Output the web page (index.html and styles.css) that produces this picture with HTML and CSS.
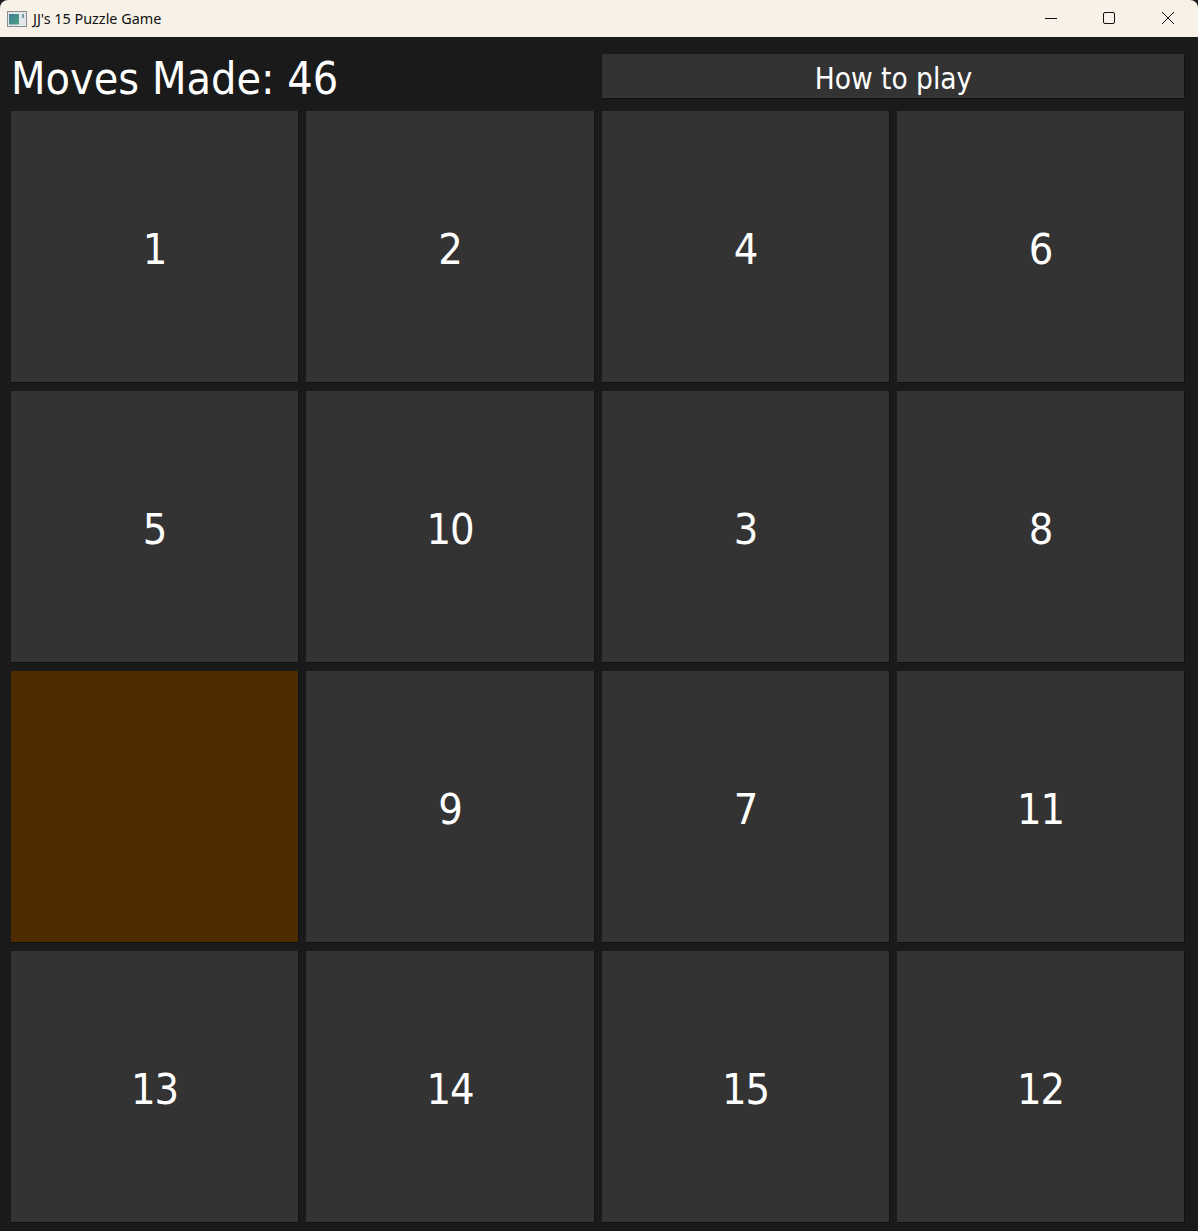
FILE: index.html
```html
<!DOCTYPE html>
<html lang="en">
<head>
<meta charset="UTF-8">
<title>JJ's 15 Puzzle Game</title>
<link rel="stylesheet" href="styles.css">
</head>
<body>

<div class="titlebar">
    <svg class="app-icon" width="20" height="16" viewBox="0 0 20 16">
        <defs>
            <linearGradient id="iconFill" x1="0" y1="0" x2="1" y2="1">
                <stop offset="0" stop-color="#3f7f9f"/>
                <stop offset="1" stop-color="#4f9f78"/>
            </linearGradient>
        </defs>
        <rect x="0.5" y="0.5" width="19" height="15" fill="#e4e8ea" stroke="#8a8f94"/>
        <rect x="2" y="3" width="10" height="10.500" fill="url(#iconFill)"/>
        <rect x="15" y="3" width="2" height="4" fill="#6f9fa8"/>
    </svg>
    <span class="window-title">JJ's 15 Puzzle Game</span>
    <div class="window-buttons">
        <svg width="12" height="12" viewBox="0 0 12 12"><path d="M0 6.500H12" stroke="#111" fill="none"/></svg>
        <svg width="12" height="12" viewBox="0 0 12 12"><rect x="0.500" y="0.500" width="11" height="11" rx="1.500" stroke="#111" fill="none"/></svg>
        <svg width="14" height="14" viewBox="0 0 14 14"><path d="M1 1L13 13M13 1L1 13" stroke="#111" fill="none"/></svg>
    </div>
</div>

<div class="game">
    <div class="top-row">
        <div class="moves">Moves Made: 46</div>
        <button class="help-btn">How to play</button>
    </div>
    <div class="board">
        <button class="tile">1</button>
        <button class="tile">2</button>
        <button class="tile">4</button>
        <button class="tile">6</button>
        <button class="tile">5</button>
        <button class="tile">10</button>
        <button class="tile">3</button>
        <button class="tile">8</button>
        <button class="tile empty"></button>
        <button class="tile">9</button>
        <button class="tile">7</button>
        <button class="tile">11</button>
        <button class="tile">13</button>
        <button class="tile">14</button>
        <button class="tile">15</button>
        <button class="tile">12</button>
    </div>
</div>

</body>
</html>
```

FILE: styles.css
```css
html, body {
    margin: 0;
    padding: 0;
    height: 100%;
    overflow: hidden;
    background-color: #1a1a1a;
}
body {
    font-family: "DejaVu Sans Condensed", "DejaVu Sans", sans-serif;
    font-stretch: condensed;
    color: #fff;
}
.titlebar {
    display: flex;
    align-items: center;
    height: 37px;
    padding-left: 7px;
    background-color: #f8f1e8;
    border-radius: 8px 8px 0 0;
    color: #111;
}
.app-icon {
    margin-right: 6px;
}
.window-title {
    font-family: "Noto Sans", sans-serif;
    font-stretch: normal;
    font-size: 14.4px;
}
.window-buttons {
    display: flex;
    align-items: center;
    gap: 46px;
    margin-left: auto;
    margin-right: 23px;
    margin-bottom: 1px;
}
.game {
    padding: 0 13px 8px 11px;
}
.top-row {
    display: grid;
    grid-template-columns: 583px 582px;
    column-gap: 8px;
    align-items: center;
    height: 74px;
}
.moves {
    font-size: 44.5px;
    line-height: 44px;
    padding-top: 10px;
}
.help-btn {
    height: 45px;
    margin-top: 5px;
    padding: 6px 0 0 1px;
    font-family: inherit;
    font-stretch: condensed;
    font-size: 29.5px;
    color: #fff;
    background-color: #333;
    border: none;
    border-bottom: 1px solid #111;
    box-shadow: 1px 0 0 #111;
}
.board {
    display: grid;
    grid-template-columns: 287px 288px 287px 287px;
    grid-auto-rows: 272px;
    gap: 8px;
}
.tile {
    font-family: inherit;
    font-stretch: condensed;
    font-size: 43px;
    letter-spacing: -1px;
    color: #fff;
    background-color: #333;
    border: none;
    border-bottom: 1px solid #111;
    box-shadow: 1px 0 0 #111;
    padding: 4px 0 0 0;
}
.tile.empty {
    background-color: #4f2b00;
}
```
